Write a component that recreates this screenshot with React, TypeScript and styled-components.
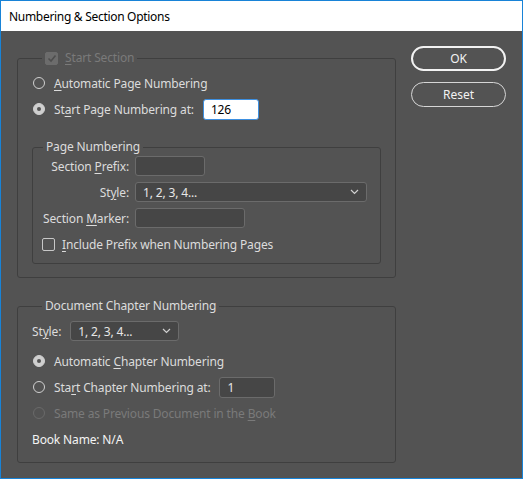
import React from "react";
import styled, { createGlobalStyle } from "styled-components";

const GlobalStyle = createGlobalStyle`
  html, body {
    margin: 0;
    padding: 0;
    background: #535353;
  }
  * {
    box-sizing: border-box;
  }
`;

const Window = styled.div`
  width: 523px;
  height: 479px;
  border: 1px solid #1883d7;
  display: flex;
  flex-direction: column;
  font-family: "Noto Sans", "Open Sans", sans-serif;
  font-size: 12px;
  letter-spacing: -0.15px;
  color: #dcdcdc;
  overflow: hidden;
`;

const TitleBar = styled.div`
  height: 30px;
  flex: none;
  background: #fff;
  color: #000;
  display: flex;
  align-items: center;
  padding-left: 8px;
  font-size: 12px;
  letter-spacing: -0.3px;
`;

const Body = styled.div`
  flex: 1;
  background: #535353;
  display: flex;
  gap: 15px;
  padding: 15px 16px 0 16px;
`;

const MainColumn = styled.div`
  width: 380px;
  padding-top: 4px;
  display: flex;
  flex-direction: column;
  gap: 20px;
`;

const ButtonColumn = styled.div`
  width: 95px;
  display: flex;
  flex-direction: column;
  gap: 11px;
`;

const Button = styled.button<{ $default?: boolean }>`
  height: 25px;
  border-radius: 13px;
  background: transparent;
  border: ${(p) => (p.$default ? "2px solid #f2f2f2" : "1px solid #d6d6d6")};
  color: #f2f2f2;
  font-family: inherit;
  font-size: 12px;
  padding: 0;
  cursor: pointer;
`;

const Group = styled.fieldset<{ $padTop?: number; $padBottom?: number }>`
  margin: 0;
  border: 1px solid #3f3f3f;
  border-radius: 3px;
  padding: ${(p) => p.$padTop ?? 0}px 14px ${(p) => p.$padBottom ?? 0}px 14px;
  min-width: 0;
`;

const Legend = styled.legend<{ $dim?: boolean }>`
  margin-left: 10px;
  padding: 0 3px;
  height: 16px;
  line-height: 16px;
  display: flex;
  align-items: center;
  gap: 7px;
  color: ${(p) => (p.$dim ? "#7a7a7a" : "#dcdcdc")};
`;

const InnerGroup = styled(Group)`
  margin-top: 17px;
  padding-left: 0;
  padding-right: 0;
`;

const Row = styled.div<{ $h?: number }>`
  height: ${(p) => p.$h ?? 26}px;
  display: flex;
  align-items: center;
  gap: 9px;
`;

const RowLabel = styled.span<{ $dim?: boolean; $bright?: boolean }>`
  color: ${(p) => (p.$dim ? "#7a7a7a" : p.$bright ? "#f4f4f4" : "#dcdcdc")};
  white-space: nowrap;
`;

const Key = styled.u`
  text-decoration-thickness: 1px;
  text-underline-offset: 2px;
`;

const RadioDot = styled.span<{ $checked?: boolean; $dim?: boolean }>`
  width: 12px;
  height: 12px;
  flex: none;
  margin-left: 1px;
  border-radius: 50%;
  border: 1.5px solid ${(p) => (p.$dim ? "#6a6a6a" : "#d0d0d0")};
  background: ${(p) => (p.$checked ? "#cfcfcf" : "transparent")};
  display: flex;
  align-items: center;
  justify-content: center;
  &::after {
    content: "";
    display: ${(p) => (p.$checked ? "block" : "none")};
    width: 4px;
    height: 4px;
    border-radius: 50%;
    background: #535353;
  }
`;

const CheckBox = styled.span<{ $disabled?: boolean }>`
  width: 13px;
  height: 13px;
  flex: none;
  border-radius: 2px;
  border: 1px solid ${(p) => (p.$disabled ? "#6c6c6c" : "#c8c8c8")};
  background: ${(p) => (p.$disabled ? "#6c6c6c" : "transparent")};
  display: flex;
  align-items: center;
  justify-content: center;
`;

const TextBox = styled.div<{ $w: number; $h?: number; $light?: boolean }>`
  width: ${(p) => p.$w}px;
  height: ${(p) => p.$h ?? 21}px;
  flex: none;
  border-radius: 3px;
  border: 1px solid ${(p) => (p.$light ? "#3d8fe0" : "#6b6b6b")};
  background: ${(p) => (p.$light ? "#ffffff" : "#464646")};
  color: ${(p) => (p.$light ? "#000" : "#e6e6e6")};
  padding-left: 7px;
  display: flex;
  align-items: center;
`;

const SelectBox = styled(TextBox)`
  justify-content: space-between;
  padding-right: 7px;
`;

const FieldGrid = styled.div`
  display: grid;
  grid-template-columns: 96px auto;
  column-gap: 6px;
  row-gap: 6px;
  padding-top: 1px;
  align-items: center;
  justify-items: start;
`;

const FieldLabel = styled.span`
  justify-self: end;
  white-space: nowrap;
`;

const CheckRow = styled.div`
  grid-column: 1 / span 2;
  height: 20px;
  padding-left: 9px;
  display: flex;
  align-items: center;
  gap: 7px;
  white-space: nowrap;
`;

const Chevron = () => (
  <svg width="9" height="6" viewBox="0 0 9 6">
    <polyline points="1,1 4.5,4.5 8,1" fill="none" stroke="#d0d0d0" strokeWidth="1.2" />
  </svg>
);

const Tick = () => (
  <svg width="10" height="9" viewBox="0 0 10 9">
    <polyline points="1.5,4.5 4,7 8.5,1.5" fill="none" stroke="#4e4e4e" strokeWidth="1.6" />
  </svg>
);

const App: React.FC = () => {
  return (
    <>
      <GlobalStyle />
      <Window>
        <TitleBar>Numbering &amp; Section Options</TitleBar>
        <Body>
          <MainColumn>
            <Group $padTop={4} $padBottom={13}>
              <Legend $dim>
                <CheckBox $disabled>
                  <Tick />
                </CheckBox>
                <span>
                  <Key>S</Key>tart Section
                </span>
              </Legend>
              <Row>
                <RadioDot />
                <RowLabel>
                  <Key>A</Key>utomatic Page Numbering
                </RowLabel>
              </Row>
              <Row>
                <RadioDot $checked />
                <RowLabel>
                  St<Key>a</Key>rt Page Numbering at:
                </RowLabel>
                <TextBox $w={56} $light>
                  126
                </TextBox>
              </Row>
              <InnerGroup $padBottom={9}>
                <Legend>Page Numbering</Legend>
                <FieldGrid>
                  <FieldLabel>
                    Section <Key>P</Key>refix:
                  </FieldLabel>
                  <TextBox $w={70} $h={20} />
                  <FieldLabel>
                    St<Key>y</Key>le:
                  </FieldLabel>
                  <SelectBox $w={232} $h={20}>
                    <span>1, 2, 3, 4...</span>
                    <Chevron />
                  </SelectBox>
                  <FieldLabel>
                    Section <Key>M</Key>arker:
                  </FieldLabel>
                  <TextBox $w={110} $h={20} />
                  <CheckRow>
                    <CheckBox />
                    <span>
                      <Key>I</Key>nclude Prefix when Numbering Pages
                    </span>
                  </CheckRow>
                </FieldGrid>
              </InnerGroup>
            </Group>

            <Group $padTop={6} $padBottom={10}>
              <Legend>Document Chapter Numbering</Legend>
              <Row $h={22} style={{ marginBottom: 6 }}>
                <RowLabel>
                  St<Key>y</Key>le:
                </RowLabel>
                <SelectBox $w={109} $h={20}>
                  <span>1, 2, 3, 4...</span>
                  <Chevron />
                </SelectBox>
              </Row>
              <Row>
                <RadioDot $checked />
                <RowLabel>
                  Automatic <Key>C</Key>hapter Numbering
                </RowLabel>
              </Row>
              <Row>
                <RadioDot />
                <RowLabel>
                  Sta<Key>r</Key>t Chapter Numbering at:
                </RowLabel>
                <TextBox $w={56}>1</TextBox>
              </Row>
              <Row>
                <RadioDot $dim />
                <RowLabel $dim>
                  Same as Previous Document in the <Key>B</Key>ook
                </RowLabel>
              </Row>
              <Row>
                <RowLabel $bright>Book Name: N/A</RowLabel>
              </Row>
            </Group>
          </MainColumn>
          <ButtonColumn>
            <Button $default>OK</Button>
            <Button>Reset</Button>
          </ButtonColumn>
        </Body>
      </Window>
    </>
  );
};

export default App;
